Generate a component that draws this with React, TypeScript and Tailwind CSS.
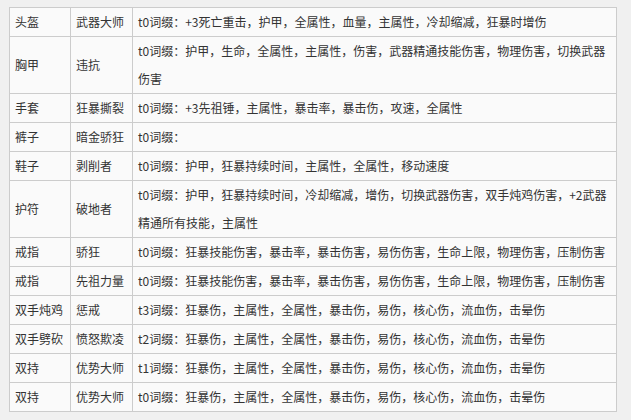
const rows: [string, string, string][] = [
  ["头盔", "武器大师", "t0词缀：+3死亡重击，护甲，全属性，血量，主属性，冷却缩减，狂暴时增伤"],
  ["胸甲", "违抗", "t0词缀：护甲，生命，全属性，主属性，伤害，武器精通技能伤害，物理伤害，切换武器伤害"],
  ["手套", "狂暴撕裂", "t0词缀：+3先祖锤，主属性，暴击率，暴击伤，攻速，全属性"],
  ["裤子", "暗金骄狂", "t0词缀："],
  ["鞋子", "剥削者", "t0词缀：护甲，狂暴持续时间，主属性，全属性，移动速度"],
  ["护符", "破地者", "t0词缀：护甲，狂暴持续时间，冷却缩减，增伤，切换武器伤害，双手炖鸡伤害，+2武器精通所有技能，主属性"],
  ["戒指", "骄狂", "t0词缀：狂暴技能伤害，暴击率，暴击伤害，易伤伤害，生命上限，物理伤害，压制伤害"],
  ["戒指", "先祖力量", "t0词缀：狂暴技能伤害，暴击率，暴击伤害，易伤伤害，生命上限，物理伤害，压制伤害"],
  ["双手炖鸡", "惩戒", "t3词缀：狂暴伤，主属性，全属性，暴击伤，易伤，核心伤，流血伤，击晕伤"],
  ["双手劈砍", "愤怒欺凌", "t2词缀：狂暴伤，主属性，全属性，暴击伤，易伤，核心伤，流血伤，击晕伤"],
  ["双持", "优势大师", "t1词缀：狂暴伤，主属性，全属性，暴击伤，易伤，核心伤，流血伤，击晕伤"],
  ["双持", "优势大师", "t0词缀：狂暴伤，主属性，全属性，暴击伤，易伤，核心伤，流血伤，击晕伤"],
];

export default function App() {
  return (
    <div
      className="min-h-screen w-[631px] h-[420px] overflow-hidden bg-[#f0f0f0] pl-[9px] pt-[7px] text-[#333] text-[12px] leading-[28px]"
      style={{ fontFamily: '"Noto Sans CJK SC", "Noto Sans", sans-serif' }}
    >
      <table className="w-[608px] table-fixed border-collapse bg-[#fafafa]">
        <colgroup>
          <col className="w-[61px]" />
          <col className="w-[62px]" />
          <col />
        </colgroup>
        <tbody>
          {rows.map(([slot, name, affix], i) => (
            <tr key={i}>
              <td className="border border-[#cccccc] px-[5px] py-0 align-middle">{slot}</td>
              <td className="border border-[#cccccc] px-[5px] py-0 align-middle">{name}</td>
              <td className="border border-[#cccccc] px-[5px] py-0 align-middle">{affix}</td>
            </tr>
          ))}
        </tbody>
      </table>
    </div>
  );
}
